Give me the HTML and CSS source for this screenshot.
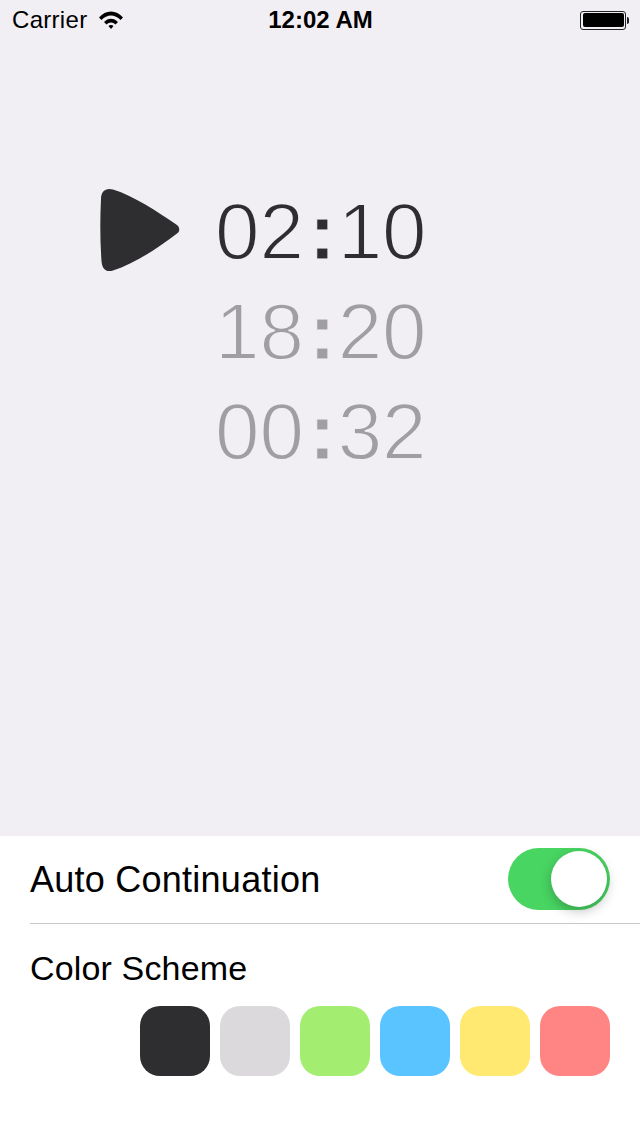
FILE: index.html
```html
<!DOCTYPE html>
<html lang="en">
<head>
	<meta charset="UTF-8">
	<link rel="stylesheet" href="styles.css">
	<title>Timer</title>
</head>
<body>
	<div id="statusbar">
		<div class="status-left">
			<span>Carrier</span>
			<svg class="wifi" width="24" height="18" viewBox="0 0 24 18">
				<path d="M0 6.500C6.500 -1.500 17.500 -1.500 24 6.500L21.500 9C16 3 8 3 2.500 9Z"/>
				<path d="M5 11C9 6.500 15 6.500 19 11L16.500 13.500C14 10.800 10 10.800 7.500 13.500Z"/>
				<path d="M9.500 15C11 13.500 13 13.500 14.500 15L12 18Z"/>
			</svg>
		</div>
		<div class="clock">12:02 AM</div>
		<div class="status-right">
			<div class="battery"><div class="battery-fill"></div></div>
			<div class="battery-tip"></div>
		</div>
	</div>
	<div id="timers">
		<svg class="play" width="80" height="84" viewBox="0 0 80 84">
			<path d="M1 11C1 3 6 -.5 13 1.500C34 8 58 24 77 37C80 39.500 80 43.500 77 45.500C58 60 34 76 13 82.500C6 84.500 2 81 1.500 73C0 52 0 32 1 11Z"/>
		</svg>
		<div class="time active"><span>02</span><i>:</i><span>10</span></div>
		<div class="time"><span>18</span><i>:</i><span>20</span></div>
		<div class="time"><span>00</span><i>:</i><span>32</span></div>
	</div>
	<div id="settings">
		<div class="row">
			<label>Auto Continuation</label>
			<div class="switch"><div class="knob"></div></div>
		</div>
		<div class="scheme">
			<label>Color Scheme</label>
			<div class="swatches">
				<div class="swatch dark"></div>
				<div class="swatch grey"></div>
				<div class="swatch green"></div>
				<div class="swatch blue"></div>
				<div class="swatch yellow"></div>
				<div class="swatch red"></div>
			</div>
		</div>
	</div>
</body>
</html>
```

FILE: styles.css
```css
html, body {
	height: 100%;
	margin: 0;
	padding: 0;
}
body {
	display: flex;
	flex-direction: column;
	background: #f1eff3;
	color: #000;
	font-family: "Liberation Sans", Arial, sans-serif;
	overflow: hidden;
}
#statusbar {
	display: grid;
	grid-template-columns: 1fr auto 1fr;
	align-items: center;
	height: 40px;
	padding: 0 11px 0 12px;
	font-size: 24px;
}
.status-left {
	display: flex;
	align-items: center;
	gap: 12px;
	letter-spacing: .3px;
}
.wifi {
	fill: #000;
}
.clock {
	font-weight: bold;
	font-size: 24px;
}
.status-right {
	display: flex;
	align-items: center;
	justify-content: flex-end;
}
.battery {
	box-sizing: border-box;
	width: 46px;
	height: 19px;
	padding: 1.500px;
	border: 1px solid #222;
	border-radius: 3px;
}
.battery-fill {
	height: 100%;
	background: #000;
	border-radius: 2px;
}
.battery-tip {
	width: 2px;
	height: 7px;
	margin-left: 1px;
	background: #222;
	border-radius: 0 2px 2px 0;
}
#timers {
	display: grid;
	grid-template-columns: 1fr 210px 1fr;
	grid-auto-rows: 100px;
	align-content: start;
	flex: 1;
	padding-top: 142px;
}
.play {
	grid-column: 1;
	grid-row: 1;
	align-self: center;
	justify-self: end;
	margin: -4px 35px 0 0;
	fill: #2e2d30;
}
.time {
	grid-column: 2;
	display: flex;
	font-size: 80px;
	line-height: 100px;
	color: #9f9ea1;
	/* background coloured stroke thins the regular weight down to a light one */
	-webkit-text-stroke: 1.800px #f1eff3;
}
.time i {
	font-style: normal;
	font-weight: bold;
	margin: 0 2px 0 5px;
	-webkit-text-stroke: 1px #f1eff3;
}
.time.active {
	color: #2e2d30;
}
#settings {
	height: 300px;
	background: #fff;
	font-size: 36px;
}
#settings label {
	display: block;
}
.row {
	display: flex;
	align-items: center;
	justify-content: space-between;
	height: 87px;
	margin-left: 30px;
	padding-right: 30px;
	border-bottom: 1px solid #c8c7cc;
	letter-spacing: .25px;
}
.switch {
	box-sizing: border-box;
	width: 102px;
	height: 62px;
	padding: 3px;
	margin-top: -2px;
	border-radius: 31px;
	background: #48d562;
	display: flex;
	justify-content: flex-end;
}
.knob {
	width: 56px;
	height: 56px;
	border-radius: 50%;
	background: #fff;
	box-shadow: 0 4px 12px rgba(0,0,0,.25);
}
.scheme {
	padding: 24px 30px 0;
	font-size: 34px;
	letter-spacing: .15px;
}
.scheme label {
	line-height: 41px;
}
.swatches {
	display: flex;
	justify-content: flex-end;
	gap: 10px;
	margin-top: 17px;
}
.swatch {
	width: 70px;
	height: 70px;
	border-radius: 20px;
}
.dark { background: #2e2d30; }
.grey { background: #dbd9dc; }
.green { background: #a3ed70; }
.blue { background: #59c4ff; }
.yellow { background: #ffe970; }
.red { background: #ff8585; }
```
